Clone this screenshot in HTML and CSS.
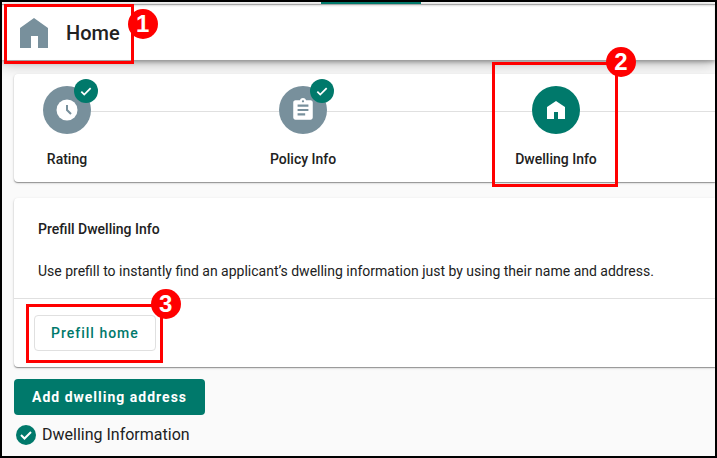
FILE: index.html
```html
<!DOCTYPE html>
<html lang="en">

<head>
    <meta charset="UTF-8">
    <meta name="viewport" content="width=device-width, initial-scale=1.0">
    <title>Home</title>
    <link rel="stylesheet" href="styles.css">
</head>

<body>
    <div class="frame">
        <div class="tabs"><span class="tab-ink"></span></div>
        <header class="header">
            <div class="header-title">
                <svg class="header-icon" viewBox="0 0 28 30"><path d="M0 30V10L14 0l14 10v20H18V18h-7v12z"/></svg>
                <h1>Home</h1>
                <div class="callout callout-title"><span class="badge">1</span></div>
            </div>
        </header>

        <main class="content">
            <section class="card">
                <ol class="steps">
                    <li class="step">
                        <div class="step-icon">
                            <svg width="24" height="24" viewBox="0 0 24 24"><circle cx="12" cy="12" r="10.500" fill="#fff"/><path d="M12 7v5l4 4" fill="none" stroke="#78909c" stroke-width="2"/></svg>
                            <span class="done"><svg width="14" height="14" viewBox="0 0 24 24"><path d="M4 13l5 5L20 7" fill="none" stroke="#fff" stroke-width="3"/></svg></span>
                        </div>
                        <span>Rating</span>
                    </li>
                    <li class="step">
                        <div class="step-icon">
                            <svg width="26" height="26" viewBox="0 0 24 24"><path fill="#fff" d="M19 3h-4.180C14.400 1.840 13.300 1 12 1s-2.400.84-2.820 2H5c-1.100 0-2 .9-2 2v14c0 1.100.9 2 2 2h14c1.100 0 2-.9 2-2V5c0-1.100-.9-2-2-2zm-7 0c.55 0 1 .45 1 1s-.45 1-1 1-1-.45-1-1 .45-1 1-1zm2 14H7v-2h7v2zm3-4H7v-2h10v2zm0-4H7V7h10v2z"/></svg>
                            <span class="done"><svg width="14" height="14" viewBox="0 0 24 24"><path d="M4 13l5 5L20 7" fill="none" stroke="#fff" stroke-width="3"/></svg></span>
                        </div>
                        <span>Policy Info</span>
                    </li>
                    <li class="step">
                        <div class="step-icon current">
                            <svg width="18" height="18" viewBox="0 0 18 18"><path fill="#fff" d="M0 18V6l9-6 9 6v12h-7v-7H7v7z"/></svg>
                        </div>
                        <span>Dwelling Info</span>
                        <div class="callout callout-step"><span class="badge">2</span></div>
                    </li>
                </ol>
            </section>

            <section class="card">
                <div class="card-body">
                    <h2>Prefill Dwelling Info</h2>
                    <p>Use prefill to instantly find an applicant’s dwelling information just by using their name and address.</p>
                </div>
                <div class="card-actions">
                    <div class="action">
                        <button type="button" class="btn btn-outline">Prefill home</button>
                        <div class="callout callout-button"><span class="badge">3</span></div>
                    </div>
                </div>
            </section>

            <div class="section-end">
                <button type="button" class="btn btn-primary">Add dwelling address</button>
                <div class="status">
                    <svg width="20" height="20" viewBox="0 0 20 20"><circle cx="10" cy="10" r="10" fill="#00796b"/><path d="M5 10l3.500 3.500L15 7" fill="none" stroke="#fff" stroke-width="2"/></svg>
                    <span>Dwelling Information</span>
                </div>
            </div>
        </main>
    </div>
</body>

</html>
```

FILE: styles.css
```css
* {
    box-sizing: border-box;
}

body {
    margin: 0;
    font-family: Roboto, Arial, sans-serif;
    font-size: 14px;
    line-height: 20px;
    color: #212121;
}

h1, h2, p, ol {
    margin: 0;
    padding: 0;
}

svg {
    display: block;
}

.frame {
    min-height: 100vh;
    border: 2px solid #000;
    background-color: #fafafa;
    overflow: hidden;
}

.tabs {
    display: flex;
    height: 2px;
    padding-left: 319px;
    background-color: #fff;
}

.tab-ink {
    width: 100px;
    background-color: #00796b;
}

/* header */
.header {
    display: flex;
    height: 56px;
    background-color: #fff;
    border-top: 1px solid #a8a8a8;
    box-shadow: inset 0 1px 2px #ddd, 0 2px 4px rgba(0, 0, 0, 0.3), 0 4px 14px rgba(0, 0, 0, 0.25);
}

.header-title {
    position: relative;
    z-index: 2;
    display: flex;
    align-items: center;
    gap: 18px;
    padding: 0 14px 0 18px;
}

.header-icon {
    width: 28px;
    height: 30px;
    fill: #78909c;
}

h1 {
    font-size: 20px;
    line-height: 28px;
    font-weight: 500;
}

/* cards */
.content {
    display: flex;
    flex-direction: column;
    gap: 16px;
    padding: 14px 0 0 12px;
}

.card {
    position: relative;
    background-color: #fff;
    border-radius: 4px 0 0 4px;
    box-shadow: 0 1px 1px rgba(0, 0, 0, 0.35), 0 1px 3px rgba(0, 0, 0, 0.15);
}

.steps {
    position: relative;
    display: flex;
    gap: 179px;
    padding: 12px 0 13px 29px;
    list-style: none;
}

/* line that joins the steps */
.steps::before {
    content: "";
    position: absolute;
    top: 37px;
    left: 53px;
    right: 0;
    height: 1px;
    background-color: #e0e0e0;
}

.step {
    position: relative;
    display: flex;
    flex-direction: column;
    align-items: center;
    gap: 15px;
    min-width: 48px;
    font-weight: 500;
    white-space: nowrap;
}

.step-icon {
    position: relative;
    display: flex;
    align-items: center;
    justify-content: center;
    width: 48px;
    height: 48px;
    border-radius: 50%;
    background-color: #78909c;
}

.current,
.done {
    background-color: #00796b;
}

.done {
    position: absolute;
    top: -7px;
    right: -7px;
    display: flex;
    align-items: center;
    justify-content: center;
    width: 24px;
    height: 24px;
    border-radius: 50%;
}

.card-body {
    display: flex;
    flex-direction: column;
    gap: 22px;
    padding: 21px 24px 17px;
}

h2 {
    font-size: 14px;
    line-height: 20px;
    font-weight: 500;
}

.card-actions {
    display: flex;
    padding: 16px 20px;
    border-top: 1px solid #e0e0e0;
}

.action {
    position: relative;
}

/* buttons */
.btn {
    height: 36px;
    padding: 0 18px;
    border: none;
    border-radius: 4px;
    font-family: inherit;
    font-size: 14px;
    font-weight: 500;
    letter-spacing: 1px;
    cursor: pointer;
}

.btn-outline {
    padding: 0 16px 1px;
    border: 1px solid #e0e0e0;
    background-color: #fff;
    color: #00796b;
}

.btn-primary {
    background-color: #00796b;
    color: #fff;
    font-weight: 700;
}

.section-end {
    display: flex;
    flex-direction: column;
    align-items: flex-start;
    gap: 8px;
    margin-top: -4px;
}

.status {
    display: flex;
    align-items: center;
    gap: 6px;
    padding-left: 2px;
    font-size: 16px;
    line-height: 24px;
}

/* numbered callouts */
.callout {
    position: absolute;
    z-index: 3;
    border: 3px solid #f00;
    pointer-events: none;
}

.callout-title {
    inset: -1px 0 -4px 2px;
}

.callout-step {
    inset: -24px -21px -18px -23px;
}

.callout-button {
    inset: -11px -7px -12px -8px;
}

.badge {
    position: absolute;
    top: -18px;
    right: -21px;
    width: 30px;
    height: 30px;
    border-radius: 50%;
    background-color: #f00;
    color: #fff;
    font-family: "Liberation Sans", Arial, sans-serif;
    font-size: 24px;
    line-height: 30px;
    font-weight: 700;
    text-align: center;
}

.callout-title .badge {
    top: 2px;
    right: -27px;
}
```
